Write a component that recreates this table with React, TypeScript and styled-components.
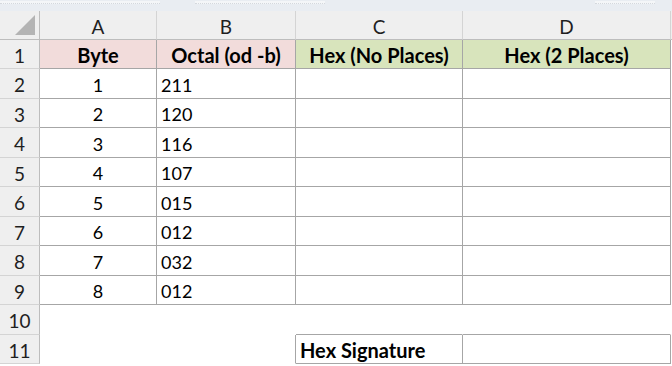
import styled, { createGlobalStyle } from "styled-components";

const GlobalStyle = createGlobalStyle`
  html, body {
    margin: 0;
    padding: 0;
    background: #ffffff;
  }
  body {
    font-family: Lato, "Open Sans", sans-serif;
    color: #000;
  }
`;

const COLUMNS = ["A", "B", "C", "D"];
const ROW_HEIGHTS = [29, 30, 29, 30, 29, 30, 29, 30, 29, 30, 29];

const bytes = [
  { byte: "1", octal: "211" },
  { byte: "2", octal: "120" },
  { byte: "3", octal: "116" },
  { byte: "4", octal: "107" },
  { byte: "5", octal: "015" },
  { byte: "6", octal: "012" },
  { byte: "7", octal: "032" },
  { byte: "8", octal: "012" },
];

type Fill = "none" | "pink" | "green";

const fills: Record<Fill, string> = {
  none: "#ffffff",
  pink: "#f2dcdb",
  green: "#d8e4bc",
};

export default function App(): JSX.Element {
  return (
    <>
      <GlobalStyle />
      <Sheet>
        <TopStrip>
          <StripBox $w={160} />
          <StripGap $w={35} />
          <StripBox $w={130} />
          <StripGap $w={270} />
          <StripBox $w={60} />
        </TopStrip>
        <Grid $rows={ROW_HEIGHTS}>
          <Corner>
            <svg width="22" height="22" viewBox="0 0 22 22">
              <polygon points="21,1 21,21 1,21" fill="#b4b4b4" />
            </svg>
          </Corner>
          {COLUMNS.map((c) => (
            <ColHead key={c}>{c}</ColHead>
          ))}
          <ColHeadRest />

          <RowHead>1</RowHead>
          <Cell $fill="pink" $align="center" $bold $right $bottom>Byte</Cell>
          <Cell $fill="pink" $align="center" $bold $right $bottom>Octal (od -b)</Cell>
          <Cell $fill="green" $align="center" $bold $right $bottom>Hex (No Places)</Cell>
          <Cell $fill="green" $align="center" $bold $right $bottom>Hex (2 Places)</Cell>
          <Rest />

          {bytes.map((b, i) => (
            <Row key={b.byte}>
              <RowHead>{i + 2}</RowHead>
              <Cell $align="center" $right $bottom>{b.byte}</Cell>
              <Cell $right $bottom>{b.octal}</Cell>
              <Cell $right $bottom />
              <Cell $right $bottom />
              <Rest />
            </Row>
          ))}

          <RowHead>10</RowHead>
          <Cell />
          <Cell />
          <Cell $bottom />
          <Cell $bottom />
          <Rest />

          <RowHead>11</RowHead>
          <Cell />
          <Cell $right />
          <Cell $bold $right $bottom>Hex Signature</Cell>
          <Cell $right $bottom />
          <Rest />
        </Grid>
      </Sheet>
    </>
  );
}

function Row({ children }: { children: React.ReactNode }) {
  return <>{children}</>;
}

const Sheet = styled.div`
  width: 672px;
  height: 366px;
  overflow: hidden;
  background: #ffffff;
`;

const TopStrip = styled.div`
  height: 11px;
  display: flex;
  background: #e9edf2;
  box-sizing: border-box;
  padding-top: 1px;
`;

const StripBox = styled.div<{ $w: number }>`
  width: ${(p) => p.$w}px;
  height: 2px;
  border-bottom: 1px dotted #d4d8dd;
  background: #f4f6f8;
`;

const StripGap = styled.div<{ $w: number }>`
  width: ${(p) => p.$w}px;
`;

const Grid = styled.div<{ $rows: number[] }>`
  display: grid;
  grid-template-columns: 40px 117px 139px 167px 208px 1fr;
  grid-template-rows: 29px ${(p) => p.$rows.map((h) => `${h}px`).join(" ")};
  font-size: 18px;
`;

const Corner = styled.div`
  background: #efefef;
  border-right: 1px solid #bdbdbd;
  border-bottom: 1px solid #bdbdbd;
  box-sizing: border-box;
  display: flex;
  align-items: flex-end;
  justify-content: flex-end;
  padding: 0 3px 3px 0;
`;

const ColHead = styled.div`
  background: #efefef;
  border-right: 1px solid #d4d4d4;
  border-bottom: 1px solid #bdbdbd;
  box-sizing: border-box;
  display: flex;
  align-items: center;
  justify-content: center;
  color: #1f1f1f;
  font-size: 19px;
  padding-top: 2px;
`;

const ColHeadRest = styled.div`
  background: #efefef;
  border-bottom: 1px solid #bdbdbd;
`;

const RowHead = styled.div`
  background: #efefef;
  border-right: 1px solid #bdbdbd;
  border-bottom: 1px solid #d4d4d4;
  box-sizing: border-box;
  display: flex;
  align-items: center;
  justify-content: center;
  color: #1f1f1f;
  font-size: 19px;
  padding-top: 2px;
`;

const Cell = styled.div<{
  $fill?: Fill;
  $align?: "left" | "center";
  $bold?: boolean;
  $right?: boolean;
  $bottom?: boolean;
}>`
  background: ${(p) => fills[p.$fill ?? "none"]};
  border-right: 1px solid ${(p) => (p.$right ? "#a6a6a6" : "transparent")};
  border-bottom: 1px solid ${(p) => (p.$bottom ? "#a6a6a6" : "transparent")};
  box-sizing: border-box;
  display: flex;
  align-items: center;
  justify-content: ${(p) => (p.$align === "center" ? "center" : "flex-start")};
  padding: 2px 4px 0 4px;
  font-weight: ${(p) => (p.$bold ? 700 : 400)};
  font-size: ${(p) => (p.$bold ? "20px" : "18px")};
  white-space: nowrap;
  overflow: hidden;
`;

const Rest = styled.div``;
